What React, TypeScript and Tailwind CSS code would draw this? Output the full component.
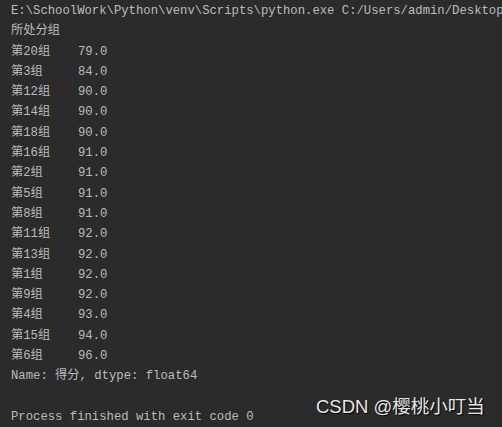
import React from "react";

const rows: [string, string][] = [
  ["第20组", "79.0"],
  ["第3组", "84.0"],
  ["第12组", "90.0"],
  ["第14组", "90.0"],
  ["第18组", "90.0"],
  ["第16组", "91.0"],
  ["第2组", "91.0"],
  ["第5组", "91.0"],
  ["第8组", "91.0"],
  ["第11组", "92.0"],
  ["第13组", "92.0"],
  ["第1组", "92.0"],
  ["第9组", "92.0"],
  ["第4组", "93.0"],
  ["第15组", "94.0"],
  ["第6组", "96.0"],
];

export default function App() {
  return (
    <div
      className="w-[502px] h-[427px] bg-[#2b2b2b] overflow-hidden relative text-[#bbbbbb] text-[12.25px] leading-[20.3px]"
      style={{ fontFamily: '"Liberation Mono", "Noto Sans CJK SC", monospace' }}
    >
      <div className="pl-[11px] mt-[1px] flex flex-col">
        <div className="whitespace-pre">E:\SchoolWork\Python\venv\Scripts\python.exe C:/Users/admin/Desktop/</div>
        <div>所处分组</div>
        {rows.map(([g, v]) => (
          <div key={g} className="flex">
            <span className="w-[67px]">{g}</span>
            <span>{v}</span>
          </div>
        ))}
        <div className="whitespace-pre">Name: 得分, dtype: float64</div>
        <div className="h-[20.3px]" />
        <div className="whitespace-pre">Process finished with exit code 0</div>
      </div>
      <div
        className="absolute left-[316px] top-[396px] text-[18.5px] leading-[22px] text-[#e6e6e6] whitespace-nowrap [text-shadow:1px_1px_1px_#000]"
        style={{ fontFamily: '"Liberation Sans", "Noto Sans CJK SC", sans-serif' }}
      >
        CSDN @樱桃小叮当
      </div>
    </div>
  );
}
